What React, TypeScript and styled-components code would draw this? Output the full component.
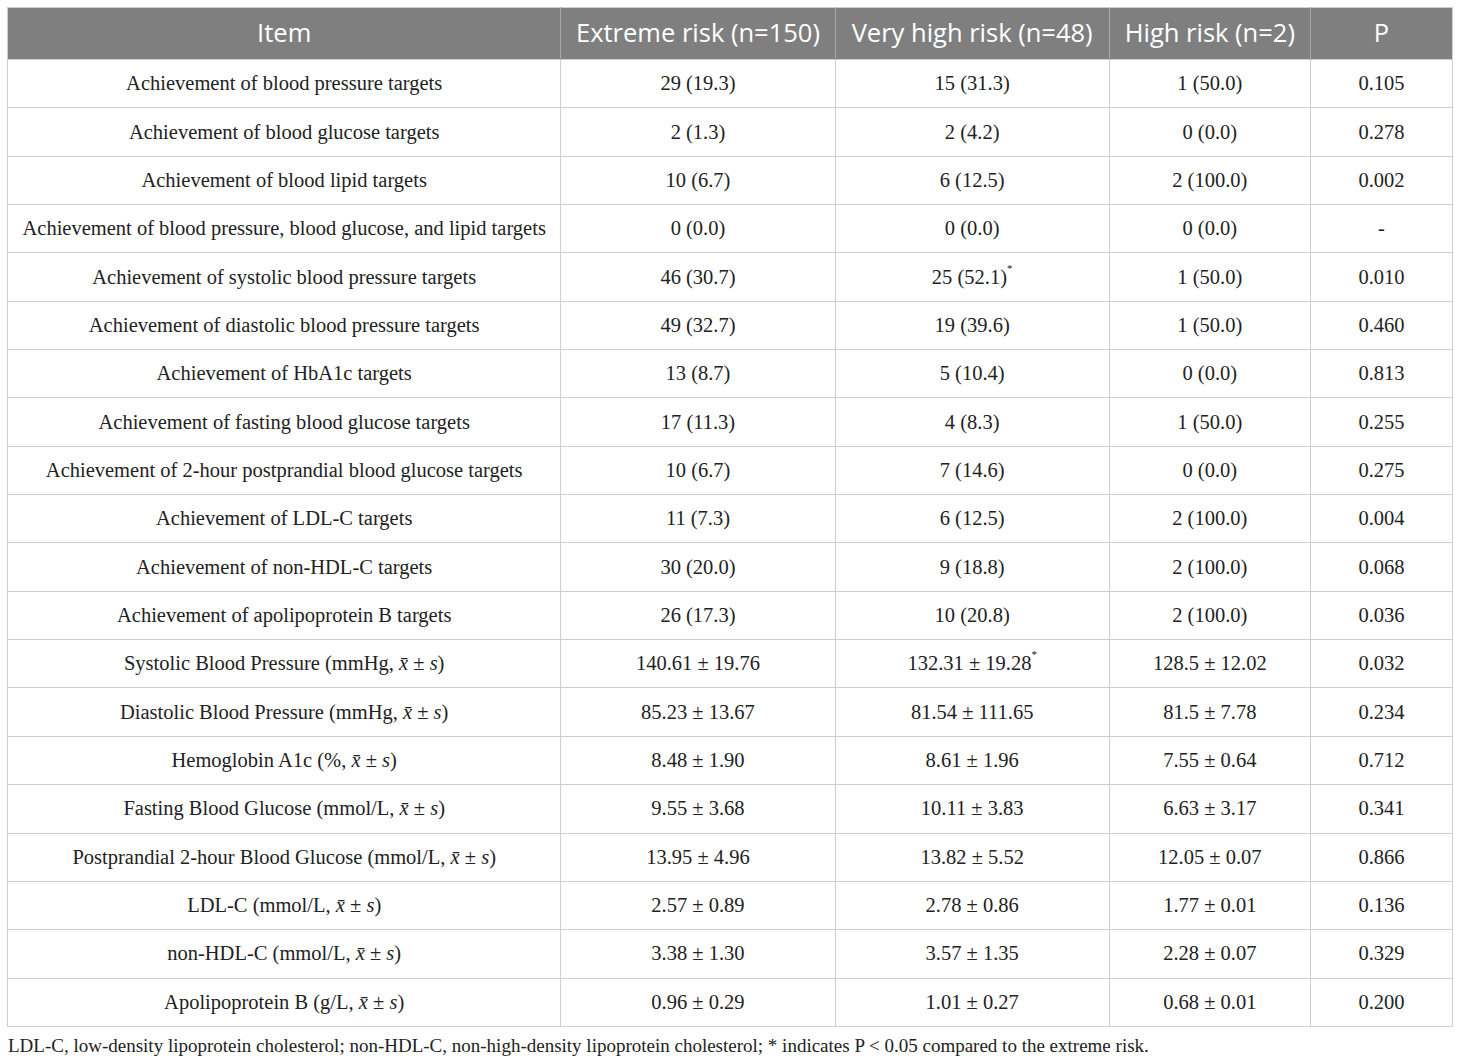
import React from "react"
import styled, { createGlobalStyle } from "styled-components"

const GlobalStyle = createGlobalStyle`
  body {
    margin: 0;
    background: #ffffff;
  }
`

type Row = [string, string, string, string]

const mean = (label: string, unit: string) => (
  <>
    {label} ({unit}, <Var>x̄</Var> ± <Var>s</Var>)
  </>
)

const counts: { item: string; cells: Row }[] = [
  { item: "Achievement of blood pressure targets", cells: ["29 (19.3)", "15 (31.3)", "1 (50.0)", "0.105"] },
  { item: "Achievement of blood glucose targets", cells: ["2 (1.3)", "2 (4.2)", "0 (0.0)", "0.278"] },
  { item: "Achievement of blood lipid targets", cells: ["10 (6.7)", "6 (12.5)", "2 (100.0)", "0.002"] },
  { item: "Achievement of blood pressure, blood glucose, and lipid targets", cells: ["0 (0.0)", "0 (0.0)", "0 (0.0)", "-"] },
  { item: "Achievement of systolic blood pressure targets", cells: ["46 (30.7)", "25 (52.1)*", "1 (50.0)", "0.010"] },
  { item: "Achievement of diastolic blood pressure targets", cells: ["49 (32.7)", "19 (39.6)", "1 (50.0)", "0.460"] },
  { item: "Achievement of HbA1c targets", cells: ["13 (8.7)", "5 (10.4)", "0 (0.0)", "0.813"] },
  { item: "Achievement of fasting blood glucose targets", cells: ["17 (11.3)", "4 (8.3)", "1 (50.0)", "0.255"] },
  { item: "Achievement of 2-hour postprandial blood glucose targets", cells: ["10 (6.7)", "7 (14.6)", "0 (0.0)", "0.275"] },
  { item: "Achievement of LDL-C targets", cells: ["11 (7.3)", "6 (12.5)", "2 (100.0)", "0.004"] },
  { item: "Achievement of non-HDL-C targets", cells: ["30 (20.0)", "9 (18.8)", "2 (100.0)", "0.068"] },
  { item: "Achievement of apolipoprotein B targets", cells: ["26 (17.3)", "10 (20.8)", "2 (100.0)", "0.036"] },
]

const measures: { label: string; unit: string; cells: Row }[] = [
  { label: "Systolic Blood Pressure", unit: "mmHg", cells: ["140.61 ± 19.76", "132.31 ± 19.28*", "128.5 ± 12.02", "0.032"] },
  { label: "Diastolic Blood Pressure", unit: "mmHg", cells: ["85.23 ± 13.67", "81.54 ± 111.65", "81.5 ± 7.78", "0.234"] },
  { label: "Hemoglobin A1c", unit: "%", cells: ["8.48 ± 1.90", "8.61 ± 1.96", "7.55 ± 0.64", "0.712"] },
  { label: "Fasting Blood Glucose", unit: "mmol/L", cells: ["9.55 ± 3.68", "10.11 ± 3.83", "6.63 ± 3.17", "0.341"] },
  { label: "Postprandial 2-hour Blood Glucose", unit: "mmol/L", cells: ["13.95 ± 4.96", "13.82 ± 5.52", "12.05 ± 0.07", "0.866"] },
  { label: "LDL-C", unit: "mmol/L", cells: ["2.57 ± 0.89", "2.78 ± 0.86", "1.77 ± 0.01", "0.136"] },
  { label: "non-HDL-C", unit: "mmol/L", cells: ["3.38 ± 1.30", "3.57 ± 1.35", "2.28 ± 0.07", "0.329"] },
  { label: "Apolipoprotein B", unit: "g/L", cells: ["0.96 ± 0.29", "1.01 ± 0.27", "0.68 ± 0.01", "0.200"] },
]

function Value({ text }: { text: string }) {
  if (text.endsWith("*")) {
    return (
      <>
        {text.slice(0, -1)}
        <Mark>*</Mark>
      </>
    )
  }
  return <>{text}</>
}

export default function App() {
  return (
    <Page>
      <GlobalStyle />
      <Table>
        <colgroup>
          <col style={{ width: 553 }} />
          <col style={{ width: 274 }} />
          <col style={{ width: 274 }} />
          <col style={{ width: 201 }} />
          <col style={{ width: 142 }} />
        </colgroup>
        <thead>
          <tr>
            <Head>Item</Head>
            <Head>Extreme risk (n=150)</Head>
            <Head>Very high risk (n=48)</Head>
            <Head>High risk (n=2)</Head>
            <Head>P</Head>
          </tr>
        </thead>
        <tbody>
          {counts.map((r) => (
            <tr key={r.item}>
              <Cell>{r.item}</Cell>
              {r.cells.map((c, i) => (
                <Cell key={i}>
                  <Value text={c} />
                </Cell>
              ))}
            </tr>
          ))}
          {measures.map((r) => (
            <tr key={r.label}>
              <Cell>{mean(r.label, r.unit)}</Cell>
              {r.cells.map((c, i) => (
                <Cell key={i}>
                  <Value text={c} />
                </Cell>
              ))}
            </tr>
          ))}
        </tbody>
      </Table>
      <Footnote>
        LDL-C, low-density lipoprotein cholesterol; non-HDL-C, non-high-density
        lipoprotein cholesterol; * indicates P &lt; 0.05 compared to the extreme
        risk.
      </Footnote>
    </Page>
  )
}

const Page = styled.div`
  padding: 7px 0 0 7px;
  width: 1446px;
`

const Table = styled.table`
  border-collapse: collapse;
  table-layout: fixed;
  width: 1446px;
  border: 1px solid #cfcfcf;
`

const Head = styled.th`
  background: #7f7f7f;
  color: #ffffff;
  font-family: "Open Sans", "Noto Sans", sans-serif;
  font-weight: 400;
  font-size: 25.5px;
  height: 47px;
  padding: 0 0 4px;
  text-align: center;
  border-left: 1px solid #a8a8a8;
  &:first-child {
    border-left: none;
  }
`

const Cell = styled.td`
  font-family: "Liberation Serif", "Times New Roman", serif;
  font-size: 20.5px;
  color: #222222;
  height: 47.35px;
  padding: 0 2px;
  text-align: center;
  white-space: nowrap;
  border: 1px solid #cfcfcf;
`

const Var = styled.i`
  font-style: italic;
`

const Mark = styled.sup`
  font-size: 11px;
  vertical-align: top;
  position: relative;
  top: -4px;
`

const Footnote = styled.p`
  margin: 8px 0 0 1px;
  font-family: "Liberation Serif", "Times New Roman", serif;
  font-size: 19px;
  color: #222222;
  white-space: nowrap;
`
